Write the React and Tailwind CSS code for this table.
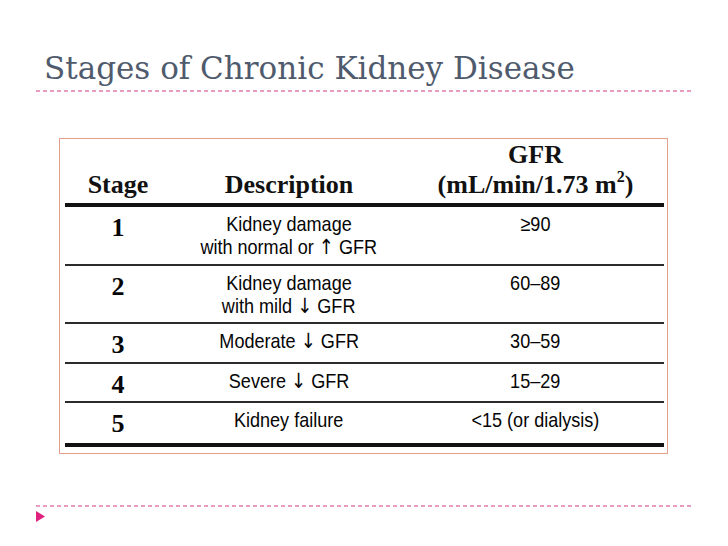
import React from "react";

const rows = [
  { stage: "1", desc: [["Kidney damage"], ["with normal or ", "↑", " GFR"]], gfr: "≥90", h: "h-[57px]" },
  { stage: "2", desc: [["Kidney damage"], ["with mild ", "↓", " GFR"]], gfr: "60–89", h: "h-[56px]" },
  { stage: "3", desc: [["Moderate ", "↓", " GFR"]], gfr: "30–59", h: "h-[38px]" },
  { stage: "4", desc: [["Severe ", "↓", " GFR"]], gfr: "15–29", h: "h-[37px]" },
  { stage: "5", desc: [["Kidney failure"]], gfr: "<15 (or dialysis)", h: "h-[40px]" },
];

function Dashed() {
  return (
    <div className="h-[2px] bg-[repeating-linear-gradient(90deg,#e99cc2_0px,#e99cc2_4px,transparent_4px,transparent_7px)]" />
  );
}

// condensed look: Liberation Sans squeezed horizontally
function Narrow({ children }) {
  return <span className="inline-block scale-x-[0.86] whitespace-nowrap">{children}</span>;
}

export default function App() {
  return (
    <div className="w-[728px] h-[546px] bg-white overflow-hidden">
      {/* title */}
      <div className="pt-[48px] pl-[36px] pr-[34px]">
        <h1 className="pl-[8px] h-[41px] text-[31px] leading-[41px] font-['DejaVu_Serif',serif] text-[#4f5b6d]">
          Stages of Chronic Kidney Disease
        </h1>
        <div className="mt-[1px]">
          <Dashed />
        </div>
      </div>

      {/* table box */}
      <div className="ml-[59px] mt-[46px] w-[609px] h-[316px] border border-[#e2a08c] pl-[5px] pr-[3px]">
        <div className="grid grid-cols-[106px_236px_1fr] h-[64px] items-end pb-[4px] font-['Liberation_Serif',serif] font-bold text-[26px] leading-[28px] text-[#111]">
          <div className="text-center">Stage</div>
          <div className="text-center">Description</div>
          <div className="text-center">
            <div className="leading-[26px] mb-[3px]">GFR</div>
            <div>
              (mL/min/1.73 m<sup className="text-[16px] top-[-0.7em]">2</sup>)
            </div>
          </div>
        </div>
        <div className="h-[4px] bg-[#111]" />
        {rows.map((r, i) => (
          <div key={r.stage}>
            <div className={`grid grid-cols-[106px_236px_1fr] ${r.h} pt-[5px] text-[#050505]`}>
              <div className="pt-[1px] text-center font-['Liberation_Serif',serif] font-bold text-[26px] leading-[30px]">
                {r.stage}
              </div>
              <div className="text-center font-['Liberation_Sans',sans-serif] text-[21px] leading-[23px]">
                {r.desc.map((line, j) => (
                  <div key={j}>
                    <Narrow>
                      {line[0]}
                      {line[1] && <span className="font-['DejaVu_Sans',sans-serif]">{line[1]}</span>}
                      {line[2]}
                    </Narrow>
                  </div>
                ))}
              </div>
              <div className="text-center font-['Liberation_Sans',sans-serif] text-[21px] leading-[23px]">
                <Narrow>{r.gfr}</Narrow>
              </div>
            </div>
            {i < rows.length - 1 ? (
              <div className="h-[2px] bg-[#2b2b2b]" />
            ) : (
              <div className="h-[4px] bg-[#111]" />
            )}
          </div>
        ))}
      </div>

      {/* footer */}
      <div className="mt-[51px] pl-[36px] pr-[34px]">
        <Dashed />
        <svg className="mt-[4px]" width="10" height="11" viewBox="0 0 10 11">
          <polygon points="0,0 9,5.5 0,11" fill="#e0227f" />
        </svg>
      </div>
    </div>
  );
}
